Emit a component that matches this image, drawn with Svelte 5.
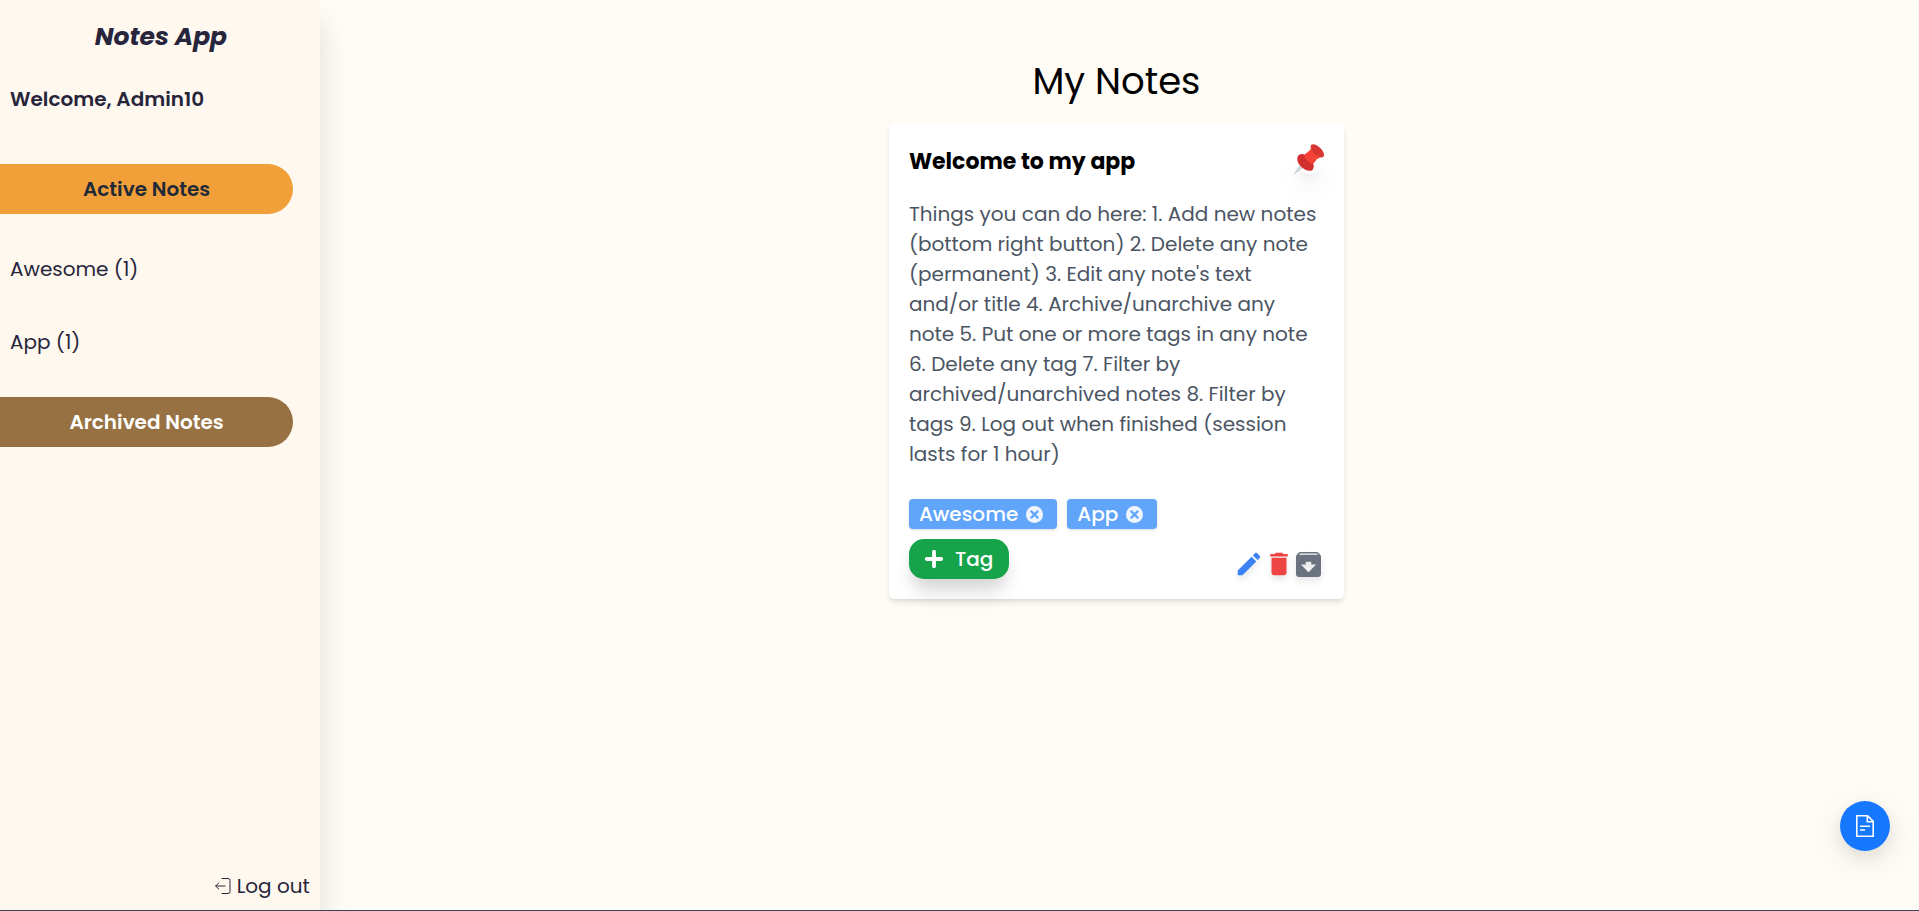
<script>
  let user = 'Admin10';
  let tags = [
    { name: 'Awesome', count: 1 },
    { name: 'App', count: 1 }
  ];
  let note = {
    title: 'Welcome to my app',
    body: "Things you can do here: 1. Add new notes (bottom right button) 2. Delete any note (permanent) 3. Edit any note's text and/or title 4. Archive/unarchive any note 5. Put one or more tags in any note 6. Delete any tag 7. Filter by archived/unarchived notes 8. Filter by tags 9. Log out when finished (session lasts for 1 hour)"
  };
</script>

<div class="layout">
  <aside class="sidebar">
    <h2 class="brand">Notes App</h2>
    <p class="welcome">Welcome, {user}</p>
    <button class="pill active" type="button">Active Notes</button>
    <nav class="filters">
      {#each tags as tag}
        <button class="filter" type="button">{tag.name} ({tag.count})</button>
      {/each}
    </nav>
    <button class="pill archived" type="button">Archived Notes</button>
    <button class="logout" type="button">
      <svg width="16" height="16" viewBox="0 0 16 16" fill="none" stroke="currentColor" stroke-linecap="round" stroke-linejoin="round" aria-hidden="true">
        <path d="M7 .5h6a2 2 0 0 1 2 2v11a2 2 0 0 1-2 2H7M10 8H.7M3.7 5l-3 3 3 3" />
      </svg>
      Log out
    </button>
  </aside>

  <main class="content">
    <h1>My Notes</h1>
    <article class="card">
      <header class="card-head">
        <h3>{note.title}</h3>
        <button class="pin" type="button" aria-label="Pin note">
          <svg width="30" height="30" viewBox="0 0 30 30" aria-hidden="true">
            <path d="M7 19.5 10.4 22.9 1.2 29.8Q.2 30.2 0 29.5Z" fill="#cbd5da" />
            <path d="M3.8 12.2C6.3 8.5 11 9.6 15.5 14.2 20 18.6 21 23 18.2 26.3 14.5 28 9.8 25.6 6.7 22.2 3.4 18.8 2.4 15.2 3.8 12.2Z" fill="#d32f2f" />
            <path d="M10.3 10.7 17.2 5.3 24.8 12.8 19.3 19.8C16.5 20.5 9.8 14 10.3 10.7Z" fill="#f44336" />
            <path d="M17.3.8C19-.8 23 .7 26.2 3.9 29.5 7.1 31 10.8 29.4 12.7 27.5 14.5 23.4 12.8 20.5 9.9 17.3 6.7 15.6 2.8 17.3.8Z" fill="#d93531" />
            <path d="M16.7 4.4C17.5 8 22.2 12.7 26.2 13.4L23.5 15.1 15.5 7Z" fill="#f44336" />
          </svg>
        </button>
      </header>
      <p class="body">{note.body}</p>
      <ul class="tags">
        {#each tags as tag}
          <li>
            {tag.name}
            <button type="button" aria-label="Remove tag {tag.name}">
              <svg width="17" height="17" viewBox="0 0 17 17" aria-hidden="true">
                <circle cx="8.5" cy="8.5" r="8.5" fill="#eff6ff" />
                <path d="m5.4 5.4 6.2 6.2m0-6.2-6.2 6.2" stroke="#60a5fa" stroke-width="2.2" stroke-linecap="round" />
              </svg>
            </button>
          </li>
        {/each}
      </ul>
      <footer class="card-foot">
        <button class="add-tag" type="button">
          <svg width="18" height="18" viewBox="0 0 18 18" aria-hidden="true">
            <path d="M9 1.8v14.4M1.8 9h14.4" stroke="#fff" stroke-width="3.8" stroke-linecap="round" />
          </svg>
          Tag
        </button>
        <div class="actions">
          <button class="edit" type="button" aria-label="Edit note">
            <svg width="30" height="30" viewBox="0 0 24 24" fill="currentColor" aria-hidden="true">
              <path d="M3 17.25V21h3.75L17.81 9.94l-3.75-3.75L3 17.25zM20.71 7.04c.39-.39.39-1.02 0-1.41l-2.34-2.34c-.39-.39-1.02-.39-1.41 0l-1.83 1.83 3.75 3.75 1.83-1.83z" />
            </svg>
          </button>
          <button class="delete" type="button" aria-label="Delete note">
            <svg width="30" height="30" viewBox="0 0 24 24" fill="currentColor" aria-hidden="true">
              <path d="M6 19c0 1.1.9 2 2 2h8c1.1 0 2-.9 2-2V7H6v12zM19 4h-3.5l-1-1h-5l-1 1H5v2h14V4z" />
            </svg>
          </button>
          <button class="archive" type="button" aria-label="Archive note">
            <svg width="25" height="25" viewBox="3 3 18 18" fill="currentColor" aria-hidden="true">
              <path d="M20.54 5.23l-1.39-1.68C18.88 3.21 18.47 3 18 3H6c-.47 0-.88.21-1.16.55L3.46 5.23C3.17 5.57 3 6.02 3 6.5V19c0 1.1.9 2 2 2h14c1.1 0 2-.9 2-2V6.5c0-.48-.17-.93-.46-1.27zM12 17.5L6.5 12H10v-2h4v2h3.5L12 17.5zM5.12 5l.81-1h12l.94 1H5.12z" />
            </svg>
          </button>
        </div>
      </footer>
    </article>
  </main>

  <button class="fab" type="button" aria-label="Add note">
    <svg width="18" height="22" viewBox="0 0 18 22" fill="none" stroke="#fff" stroke-width="1.6" aria-hidden="true">
      <path d="M.8.8h10.8l5.6 5.6v14.8H.8zM11.3.8v5.9h5.9M4 11.3h10M4 15h5" />
    </svg>
  </button>
</div>

<style>
  :global(body) {
    margin: 0;
  }

  .layout {
    box-sizing: border-box;
    display: flex;
    min-height: 100vh;
    border-bottom: 1px solid #374151;
    background: #fffcf5;
    color: #27253b;
    font-family: Poppins, Inter, sans-serif;
    font-size: 20px;
    line-height: 30px;
  }

  h1,
  h2,
  h3,
  p,
  ul {
    margin: 0;
    padding: 0;
  }

  button {
    padding: 0;
    border: 0;
    background: none;
    color: inherit;
    font: inherit;
    cursor: pointer;
  }

  svg {
    display: block;
  }

  .sidebar {
    display: flex;
    flex: none;
    flex-direction: column;
    align-items: flex-start;
    width: calc(100% / 6);
    background: #fff8ef;
    box-shadow: 4px 20px 28px -4px rgba(20, 20, 50, 0.14);
    clip-path: inset(0 -40px 0 0);
  }

  .brand {
    align-self: center;
    padding: 22px 0 0 2px;
    font-size: 25px;
    font-style: italic;
    font-weight: 700;
  }

  .welcome {
    padding: 32px 10px 50px;
    font-weight: 600;
  }

  .pill {
    width: calc(100% * 11 / 12);
    height: 50px;
    border-radius: 0 25px 25px 0;
    font-weight: 600;
  }

  .active {
    background: #f19f39;
    color: #1f2937;
  }

  .archived {
    background: #977142;
    color: #fff;
  }

  .filters {
    display: flex;
    flex-direction: column;
    align-items: flex-start;
    gap: 43px;
    padding: 40px 10px;
  }

  .logout {
    display: flex;
    align-items: center;
    align-self: flex-end;
    gap: 6px;
    margin: auto 10px 9px;
  }

  .content {
    display: flex;
    flex: 1;
    flex-direction: column;
    align-items: center;
    padding: 59px 6px 40px 0;
  }

  h1 {
    margin-bottom: 20px;
    color: #000;
    font-size: 37px;
    font-weight: 400;
    line-height: 45px;
  }

  .card {
    box-sizing: border-box;
    width: 455px;
    max-width: 100%;
    padding: 20px;
    border-radius: 5px;
    background: #fff;
    box-shadow: 0 4px 6px -1px rgba(0, 0, 0, 0.1), 0 2px 4px -2px rgba(0, 0, 0, 0.1);
  }

  .card-head,
  .card-foot {
    display: flex;
    align-items: flex-start;
    justify-content: space-between;
  }

  h3 {
    color: #000;
    font-size: 22px;
    font-weight: 700;
    line-height: 35px;
  }

  .pin {
    border-radius: 50%;
    box-shadow: 0 20px 25px -5px rgba(0, 0, 0, 0.08), 0 8px 10px -6px rgba(0, 0, 0, 0.08);
  }

  .body {
    padding: 20px 0 30px;
    color: #4b5563;
  }

  .tags {
    display: flex;
    flex-wrap: wrap;
    gap: 10px;
    margin-bottom: 10px;
    list-style: none;
  }

  .tags li {
    display: flex;
    align-items: center;
    gap: 8px;
    padding: 0 14px 0 10px;
    border-radius: 4px;
    background: #60a5fa;
    box-shadow: 0 1px 3px rgba(0, 0, 0, 0.15);
    color: #fff;
    font-weight: 500;
  }

  .add-tag {
    display: flex;
    align-items: center;
    gap: 12px;
    height: 40px;
    padding: 0 16px;
    border-radius: 15px;
    background: #16a34a;
    box-shadow: 0 20px 25px -5px rgba(0, 0, 0, 0.1), 0 8px 14px -2px rgba(0, 0, 0, 0.1);
    color: #fff;
    font-weight: 500;
  }

  .actions {
    display: flex;
    align-self: flex-end;
  }

  .actions button {
    display: grid;
    place-items: center;
    width: 30px;
    height: 30px;
    filter: drop-shadow(0 4px 3px rgba(0, 0, 0, 0.1));
  }

  .actions .edit {
    color: #3b82f6;
  }

  .actions .delete {
    color: #ef4444;
  }

  .actions .archive {
    color: #6b7280;
  }

  .fab {
    position: fixed;
    right: 29px;
    bottom: 60px;
    display: grid;
    place-items: center;
    width: 50px;
    height: 50px;
    border-radius: 50%;
    background: #1677ff;
    box-shadow: 0 6px 16px rgba(0, 0, 0, 0.08), 0 9px 28px 8px rgba(0, 0, 0, 0.05);
  }
</style>
